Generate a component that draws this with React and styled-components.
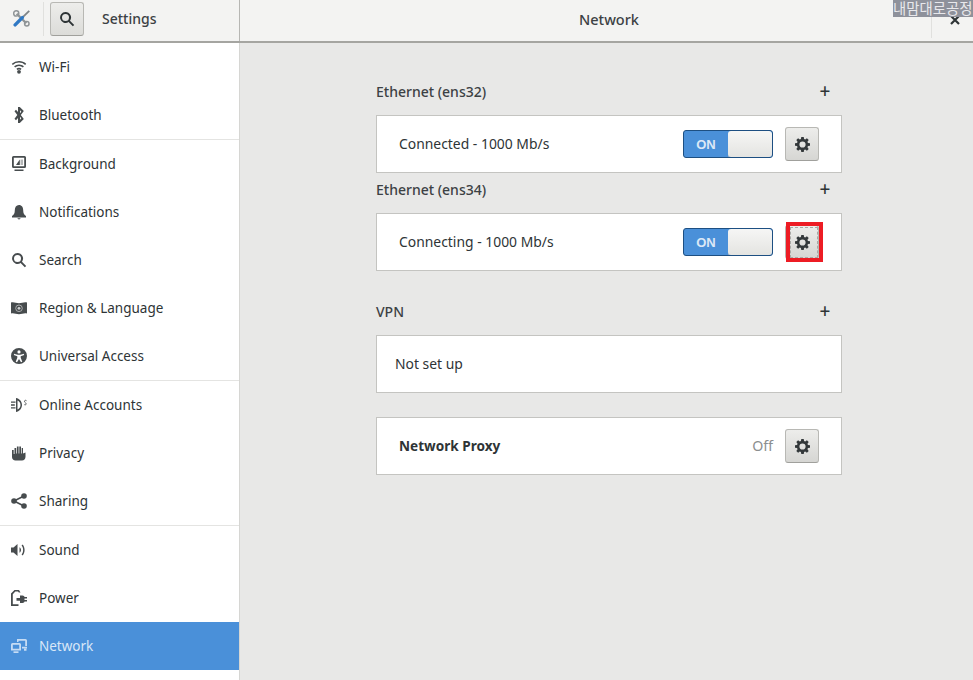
import React from "react";
import styled, { createGlobalStyle } from "styled-components";

const GlobalStyle = createGlobalStyle`
	html, body {
		margin: 0;
		padding: 0;
		height: 100%;
		overflow: hidden;
	}
	body {
		font-family: "Noto Sans", "Open Sans", sans-serif;
		font-size: 14px;
		color: #2e3436;
	}
`;

const Glyph = ({ size = 16, children, fill = "#474c4e" }) => (
	<svg width={size} height={size} viewBox="0 0 16 16" fill={fill}>
		{children}
	</svg>
);

const GearIcon = () => (
	<Glyph size={15} fill="#33383a">
		<path
			fillRule="evenodd"
			d="M6.700 0h2.600l.4 2.200 1.200.5 1.800-1.300 1.900 1.900-1.300 1.800.5 1.200 2.200.4v2.600l-2.200.4-.5 1.200 1.300 1.800-1.900 1.900-1.800-1.300-1.200.5-.4 2.200H6.700l-.4-2.200-1.200-.5-1.800 1.300-1.900-1.900 1.300-1.800-.5-1.200L0 9.300V6.700l2.200-.4.5-1.200-1.300-1.800 1.900-1.900 1.800 1.300 1.200-.5zM8 4.700a3.300 3.300 0 1 0 0 6.600 3.300 3.300 0 0 0 0-6.600z"
		/>
	</Glyph>
);

const CloseIcon = () => (
	<svg width="10" height="10" viewBox="0 0 10 10">
		<path d="M1 1l8 8M9 1l-8 8" stroke="#2e3436" strokeWidth="2.200" />
	</svg>
);

const icons = {
	wifi: (
		<Glyph>
			<path d="M8 2c2.800 0 5.300 1 7.200 2.700l-1 1.200A9.500 9.500 0 0 0 8 3.600a9.500 9.500 0 0 0-6.200 2.300l-1-1.200A11 11 0 0 1 8 2z" />
			<path d="M8 5.500c1.900 0 3.600.7 4.900 1.800l-1 1.200A6 6 0 0 0 8 7a6 6 0 0 0-3.900 1.500l-1-1.200A7.500 7.500 0 0 1 8 5.500z" />
			<path d="M8 8.800c1 0 1.900.3 2.600.9l-1 1.200A2.600 2.600 0 0 0 8 10.400c-.6 0-1.200.2-1.600.5l-1-1.200c.7-.6 1.600-.9 2.600-.9z" />
			<circle cx="8" cy="12.800" r="1.900" />
		</Glyph>
	),
	bluetooth: (
		<Glyph>
			<path
				fillRule="evenodd"
				d="M7 0h1.800l4 4-3 4 3 4-4 4H7v-5l-2 2.300-1.500-1.500L6.300 8 3.500 4.200 5 2.700l2 2.300zm2 3.300v2.900l1.300-1.500zm0 6.500v2.900l1.300-1.400z"
			/>
		</Glyph>
	),
	background: (
		<Glyph>
			<path
				fillRule="evenodd"
				d="M2.500 0h11A1.500 1.500 0 0 1 15 1.500v9a1.500 1.500 0 0 1-1.500 1.500h-11A1.500 1.500 0 0 1 1 10.500v-9A1.500 1.500 0 0 1 2.500 0zm.3 1.700v8.600h10.400V1.700z"
			/>
			<path d="M5 9l3.800-5.500V9z" />
			<path d="M9.500 3.500h2.500V9H9.500z" opacity=".4" />
			<path d="M3.500 13.500h9V15h-9z" />
		</Glyph>
	),
	bell: (
		<Glyph>
			<path d="M8 1c2.800 0 4.200 2.300 4.200 5.200 0 3 .8 4.400 2.800 5.800v1.500H1V12c2-1.400 2.800-2.800 2.800-5.800C3.800 3.300 5.200 1 8 1z" />
			<path d="M6.500 14.300h3c0 .7-.7 1.200-1.500 1.200s-1.500-.5-1.500-1.200z" />
		</Glyph>
	),
	search: (
		<Glyph>
			<path
				fillRule="evenodd"
				d="M6.500 1a5.500 5.500 0 0 1 4.500 8.700l4.200 4.200-1.400 1.400-4.200-4.200A5.500 5.500 0 1 1 6.500 1zm0 2a3.500 3.500 0 1 0 0 7 3.500 3.500 0 0 0 0-7z"
			/>
		</Glyph>
	),
	region: (
		<Glyph>
			<path d="M0 2.500c3-.8 5 .8 8 .8s5-1.600 8-.8v11c-3-.8-5 .8-8 .8s-5-1.600-8-.8z" />
			<circle cx="8" cy="8.300" r="3.300" fill="none" stroke="#b4b6b7" strokeWidth=".9" />
			<circle cx="8" cy="8.300" r="1.400" fill="#d0d2d3" />
		</Glyph>
	),
	access: (
		<Glyph>
			<path
				fillRule="evenodd"
				d="M8 0a8 8 0 1 1 0 16A8 8 0 0 1 8 0zm0 2.300a1.600 1.600 0 1 0 0 3.200 1.600 1.600 0 0 0 0-3.200zM3.300 5.700l-.5 1.300 3.500 1.200v1.500l-1.600 4 1.300.5L8 10.900l2 3.300 1.300-.5-1.600-4V8.200L13.200 7l-.5-1.300C10.800 6.500 9.500 6.800 8 6.800s-2.800-.3-4.700-1.100z"
			/>
		</Glyph>
	),
	accounts: (
		<Glyph>
			<path d="M0 4.500h4.500v1.300H0zM0 10.200h4.500v1.300H0zM0 7.300h3.800v1.400H0z" />
			<path
				fillRule="evenodd"
				d="M5 1c3.200.5 6 3.300 6 7s-2.800 6.500-6 7zm1.500 2.500v9c1.800-.8 3-2.500 3-4.500s-1.200-3.700-3-4.500z"
			/>
			<path
				d="M15.500 3.700c-1-.8-2-.3-2 .6 0 1.300 1.800 1.300 1.600 2.800-.1.800-1 1-1.800.5"
				fill="none"
				stroke="#474c4e"
				strokeWidth=".9"
			/>
		</Glyph>
	),
	privacy: (
		<Glyph>
			<path d="M3.500 3h1.700v5.500h.7V1.500h1.700v7h.7v-7h1.700v7h.7V3H12v5.500l2.500-1v4.300c0 2.200-1.500 3.700-3.500 3.700H4.500C2.500 15.500 1 14 1 12V5h1.700v4h.8z" />
		</Glyph>
	),
	sharing: (
		<Glyph>
			<circle cx="3" cy="8" r="2.800" />
			<circle cx="13" cy="3" r="2.800" />
			<circle cx="13" cy="13" r="2.800" />
			<path d="M3 8l10-5M3 8l10 5" stroke="#474c4e" strokeWidth="1.600" fill="none" />
		</Glyph>
	),
	sound: (
		<Glyph>
			<path d="M0 5.500h2.500L6.500 2v12l-4-3.500H0z" />
			<path d="M8.500 5.300c1 .5 1.500 1.600 1.500 2.700s-.5 2.200-1.500 2.700zM11.500 2.500c1.400 1.300 2.100 3.300 2.100 5.500s-.7 4.200-2.100 5.500l-.9-1c1-1.200 1.500-2.800 1.500-4.500s-.5-3.300-1.500-4.500z" />
		</Glyph>
	),
	power: (
		<Glyph>
			<path d="M3.500 0h4.500l1.500 2.500H7.800L7 1.600H4.300L1.800 4.300v10h5.700V16H0V3.600z" />
			<path d="M9 5.500h2.500c1.200 0 2 .8 2 1.500H16v1.600h-2.500v1.400H16v1.600h-2.500c0 .8-.8 1.400-2 1.400H9v-2.200H5.500V8H9z" />
		</Glyph>
	),
	network: (
		<Glyph fill="#c6dcf4">
			<path
				fillRule="evenodd"
				d="M1.500 5h7A1.500 1.500 0 0 1 10 6.500V12.500H0V6.500A1.500 1.500 0 0 1 1.500 5zm.3 1.800v4h6.400v-4z"
			/>
			<path d="M2.500 13.300h5V15h-5z" />
			<path d="M6 1h8.500A1.500 1.500 0 0 1 16 2.500v5.500h-1.800V2.800H7.500V4H6zM11 8.800h5v1.700h-5zM13 10.800h2.500v2H13z" />
		</Glyph>
	),
};

const sidebarGroups = [
	[
		["wifi", "Wi-Fi"],
		["bluetooth", "Bluetooth"],
	],
	[
		["background", "Background"],
		["bell", "Notifications"],
		["search", "Search"],
		["region", "Region & Language"],
		["access", "Universal Access"],
	],
	[
		["accounts", "Online Accounts"],
		["privacy", "Privacy"],
		["sharing", "Sharing"],
	],
	[
		["sound", "Sound"],
		["power", "Power"],
		["network", "Network"],
	],
];

function Toggle() {
	return (
		<Switch>
			<SwitchOn>ON</SwitchOn>
			<SwitchKnob />
		</Switch>
	);
}

function App() {
	return (
		<Window>
			<GlobalStyle />
			<Watermark>내맘대로공정</Watermark>
			<Header>
				<HeaderLeft>
					<ToolsCell>
						<svg width="17" height="17" viewBox="0 0 16 16" fill="none">
							<path d="M3.500 3.500l9 9" stroke="#8f9497" strokeWidth="2.200" />
							<path d="M3 .8a2.400 2.400 0 1 0 .1 4.800A2.400 2.400 0 0 0 3 .8z" stroke="#8f9497" strokeWidth="1.400" />
							<circle cx="13" cy="13" r="2.100" stroke="#8f9497" strokeWidth="1.400" />
							<path d="M15.300.8L8.500 7.500" stroke="#7f8487" strokeWidth="1.700" />
							<path d="M8.800 7.200L2 14" stroke="#2f78c4" strokeWidth="3.200" strokeLinecap="round" />
						</svg>
					</ToolsCell>
					<SearchButton>{icons.search}</SearchButton>
					<HeaderTitle>Settings</HeaderTitle>
				</HeaderLeft>
				<HeaderRight>
					<WindowTitle>Network</WindowTitle>
					<CloseCell>
						<CloseIcon />
					</CloseCell>
				</HeaderRight>
			</Header>
			<Body>
				<Sidebar>
					{sidebarGroups.map((group, i) => (
						<SidebarGroup key={i}>
							{group.map(([icon, label]) => (
								<SidebarRow key={label} $active={label === "Network"}>
									<IconSlot>{icons[icon]}</IconSlot>
									<RowLabel>{label}</RowLabel>
								</SidebarRow>
							))}
						</SidebarGroup>
					))}
				</Sidebar>
				<Main>
					<Content>
						<SectionHead>
							Ethernet (ens32)
							<PlusButton>+</PlusButton>
						</SectionHead>
						<Card>
							<CardLabel>Connected - 1000 Mb/s</CardLabel>
							<Toggle />
							<GearButton>
								<GearIcon />
							</GearButton>
						</Card>
						<SectionHead>
							Ethernet (ens34)
							<PlusButton>+</PlusButton>
						</SectionHead>
						<Card>
							<CardLabel>Connecting - 1000 Mb/s</CardLabel>
							<Toggle />
							<GearButton $focused>
								<GearIcon />
								<Highlight />
							</GearButton>
						</Card>
						<SectionHead $spaced>
							VPN
							<PlusButton>+</PlusButton>
						</SectionHead>
						<EmptyCard>
							<CardLabel>Not set up</CardLabel>
						</EmptyCard>
						<ProxyCard>
							<ProxyLabel>Network Proxy</ProxyLabel>
							<OffText>Off</OffText>
							<GearButton>
								<GearIcon />
							</GearButton>
						</ProxyCard>
					</Content>
				</Main>
			</Body>
		</Window>
	);
}

export default App;

const Window = styled.div`
	position: relative;
	height: 100vh;
	display: flex;
	flex-direction: column;
	background: #e8e8e7;
`;

const Watermark = styled.div`
	position: absolute;
	top: 0;
	right: 0;
	width: 80px;
	height: 17px;
	background: #8e919b;
	color: #e8e8ec;
	font-family: "Noto Sans CJK KR", sans-serif;
	font-size: 14.400px;
	line-height: 16px;
	white-space: nowrap;
	z-index: 2;
`;

const Header = styled.header`
	height: 41px;
	flex: none;
	display: flex;
	background: #f3f3f2;
	border-bottom: 2px solid #a5a5a1;
`;

const HeaderLeft = styled.div`
	width: 239px;
	flex: none;
	display: flex;
	align-items: center;
	border-right: 1px solid #b6b6b3;
`;

const ToolsCell = styled.div`
	width: 43px;
	height: 34px;
	flex: none;
	margin-top: -4px;
	display: flex;
	align-items: center;
	justify-content: center;
	border-right: 1px solid #e0e0de;
`;

const SearchButton = styled.div`
	width: 34px;
	height: 34px;
	margin: -3px 0 0 6px;
	flex: none;
	display: flex;
	align-items: center;
	justify-content: center;
	box-sizing: border-box;
	border: 1px solid #b8b8b4;
	border-bottom-color: #a0a09c;
	border-radius: 3px;
	background: linear-gradient(#ededeb, #dcdcd9);

	svg {
		fill: #2e3436;
	}
`;

const HeaderTitle = styled.div`
	margin: -4px 0 0 18px;
	font-weight: 500;
	color: #3c4144;
`;

const HeaderRight = styled.div`
	flex: 1;
	display: flex;
	align-items: center;
	padding-left: 47px;
`;

const WindowTitle = styled.div`
	flex: 1;
	margin-top: -4px;
	text-align: center;
	font-size: 14.500px;
	font-weight: 500;
	color: #3c4144;
`;

const CloseCell = styled.div`
	width: 42px;
	height: 36px;
	margin-top: -2px;
	padding-left: 4px;
	box-sizing: border-box;
	flex: none;
	display: flex;
	align-items: center;
	justify-content: center;
	border-left: 1px solid #e0e0de;
`;

const Body = styled.div`
	flex: 1;
	display: flex;
	min-height: 0;
`;

const Sidebar = styled.nav`
	width: 239px;
	flex: none;
	background: #fff;
	border-right: 1px solid #d6d6d3;
`;

const SidebarGroup = styled.div`
	border-bottom: 1px solid #e4e4e2;

	&:last-child {
		border-bottom: none;
	}
`;

const SidebarRow = styled.div`
	height: 48px;
	display: flex;
	align-items: center;
	color: ${(props) => (props.$active ? "#d9e7f7" : "#2e3436")};
	background: ${(props) => (props.$active ? "#4a90d9" : "transparent")};
`;

const IconSlot = styled.span`
	width: 39px;
	flex: none;
	display: flex;
	padding-left: 11px;
	box-sizing: border-box;
`;

const RowLabel = styled.span`
	font-size: 13.500px;
	line-height: 20px;
	margin-bottom: 1px;
`;

const Main = styled.main`
	flex: 1;
	display: flex;
	padding-left: 136px;
`;

const Content = styled.div`
	width: 466px;
	display: flex;
	flex-direction: column;
	padding-top: 32px;
`;

const SectionHead = styled.div`
	height: 32px;
	margin-top: ${(props) => (props.$spaced ? "24px" : "0")};
	margin-bottom: 8px;
	flex: none;
	display: flex;
	align-items: center;
	justify-content: space-between;
	font-weight: 500;
	color: #3c4144;
`;

const PlusButton = styled.span`
	width: 34px;
	text-align: center;
	font-size: 19px;
	line-height: 1;
	font-weight: 500;
	color: #2e3436;
`;

const Card = styled.div`
	height: 58px;
	flex: none;
	display: flex;
	align-items: center;
	padding: 0 22px;
	box-sizing: border-box;
	background: #fff;
	border: 1px solid #c4c4c1;
`;

const CardLabel = styled.div`
	flex: 1;
	margin-bottom: 2px;
	font-size: 13.900px;
`;

const ProxyLabel = styled(CardLabel)`
	font-size: 13.600px;
	font-weight: 700;
`;

const EmptyCard = styled(Card)`
	padding: 0 18px;
`;

const ProxyCard = styled(Card)`
	margin-top: 24px;
`;

const Switch = styled.div`
	width: 90px;
	height: 28px;
	margin-right: 12px;
	display: flex;
	box-sizing: border-box;
	border: 1px solid #1d4f82;
	border-radius: 3px;
	background: #4a90d9;
	overflow: hidden;
`;

const SwitchOn = styled.div`
	width: 44px;
	display: flex;
	align-items: center;
	justify-content: center;
	font-family: "Liberation Sans", sans-serif;
	font-size: 13px;
	font-weight: 700;
	color: #dbe8f6;
`;

const SwitchKnob = styled.div`
	flex: 1;
	border-radius: 3px;
	background: linear-gradient(#f6f6f5, #e4e4e1);
	box-shadow: 0 1px 0 #b0b0ad;
`;

const GearButton = styled.div`
	position: relative;
	width: 34px;
	height: 34px;
	flex: none;
	display: flex;
	align-items: center;
	justify-content: center;
	box-sizing: border-box;
	border: 1px solid #b8b8b4;
	border-bottom-color: #a0a09c;
	border-radius: 3px;
	background: linear-gradient(#ededeb, #d6d6d3);

	${(props) =>
		props.$focused &&
		`
		&::after {
			content: "";
			position: absolute;
			inset: 1px 0 0 4px;
			border: 1px dashed #a9a9a6;
		}
	`}
`;

const Highlight = styled.div`
	position: absolute;
	top: -4px;
	left: 0;
	width: 37px;
	height: 40px;
	box-sizing: border-box;
	border: 4px solid #ed1c24;
	z-index: 1;
`;

const OffText = styled.div`
	margin: 0 12px 2px 0;
	font-size: 14.200px;
	color: #8b8e8f;
`;
